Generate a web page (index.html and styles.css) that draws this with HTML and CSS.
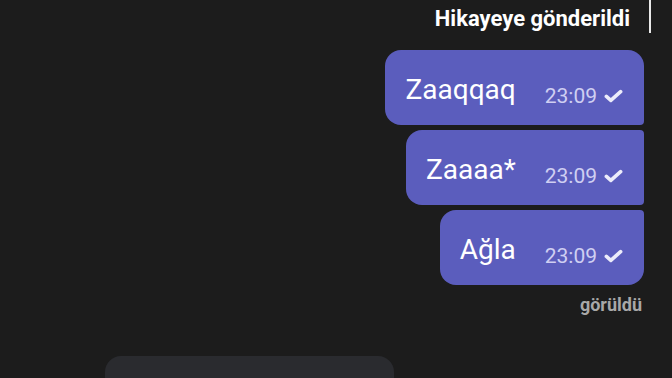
FILE: index.html
```html
<!DOCTYPE html>
<html lang="tr">
<head>
  <meta charset="UTF-8" />
  <meta name="viewport" content="width=device-width, initial-scale=1.0" />
  <title>Sohbet</title>
  <link rel="stylesheet" href="styles.css">
</head>
<body>
  <div class="header">
    <span class="story-note">Hikayeye gönderildi</span>
    <span class="story-bar"></span>
  </div>

  <div class="messages">
    <div class="bubble first">
      <span class="text">Zaaqqaq</span>
      <span class="meta">23:09
        <svg class="check" viewBox="0 0 20 14" width="19" height="14"><path d="M2.5 7.5 L7.2 11.5 L17.5 2.5" fill="none" stroke="currentColor" stroke-width="3.8" stroke-linecap="round" stroke-linejoin="round"/></svg>
      </span>
    </div>
    <div class="bubble middle">
      <span class="text">Zaaaa*</span>
      <span class="meta">23:09
        <svg class="check" viewBox="0 0 20 14" width="19" height="14"><path d="M2.5 7.5 L7.2 11.5 L17.5 2.5" fill="none" stroke="currentColor" stroke-width="3.8" stroke-linecap="round" stroke-linejoin="round"/></svg>
      </span>
    </div>
    <div class="bubble last">
      <span class="text">Ağla</span>
      <span class="meta">23:09
        <svg class="check" viewBox="0 0 20 14" width="19" height="14"><path d="M2.5 7.5 L7.2 11.5 L17.5 2.5" fill="none" stroke="currentColor" stroke-width="3.8" stroke-linecap="round" stroke-linejoin="round"/></svg>
      </span>
    </div>
    <div class="seen">görüldü</div>
  </div>

  <div class="composer"></div>
</body>
</html>
```

FILE: styles.css
```css
body {
  margin: 0;
  height: 378px;
  overflow: hidden;
  background-color: #1c1c1c;
  font-family: Roboto, "Noto Sans", sans-serif;
  color: #FFFFFF;
}
.header {
  display: flex;
  justify-content: flex-end;
  align-items: flex-start;
  gap: 19px;
  padding-right: 21px;
  height: 34px;
}
.story-note {
  font-size: 22px;
  font-weight: bold;
  line-height: 22px;
  padding-top: 8px;
}
.story-bar {
  width: 2px;
  height: 33px;
  background-color: #e8e8e8;
}
.messages {
  display: flex;
  flex-direction: column;
  align-items: flex-end;
  gap: 5px;
  margin-top: 16px;
  padding-right: 28px;
}
.bubble {
  display: flex;
  align-items: center;
  height: 75px;
  box-sizing: border-box;
  padding: 0 21px 0 20px;
  background-color: #5b5dbd;
  border-radius: 16px 4px 4px 16px;
}
.bubble.first {
  border-radius: 16px 16px 4px 16px;
}
.bubble.last {
  border-radius: 16px 4px 16px 16px;
}
.text {
  font-size: 28px;
  padding-top: 4px;
}
.meta {
  display: flex;
  align-items: center;
  gap: 7px;
  margin-left: 29px;
  padding-top: 17px;
  font-size: 21px;
  color: #cfcff2;
}
.check {
  color: #ececfa;
}
.seen {
  margin-top: 5px;
  margin-right: 2px;
  font-size: 18px;
  font-weight: bold;
  line-height: 20px;
  color: #a8a8a8;
}
.composer {
  margin: 41px 0 0 105px;
  width: 289px;
  height: 40px;
  background-color: #2a2b2f;
  border-radius: 16px;
}
```
